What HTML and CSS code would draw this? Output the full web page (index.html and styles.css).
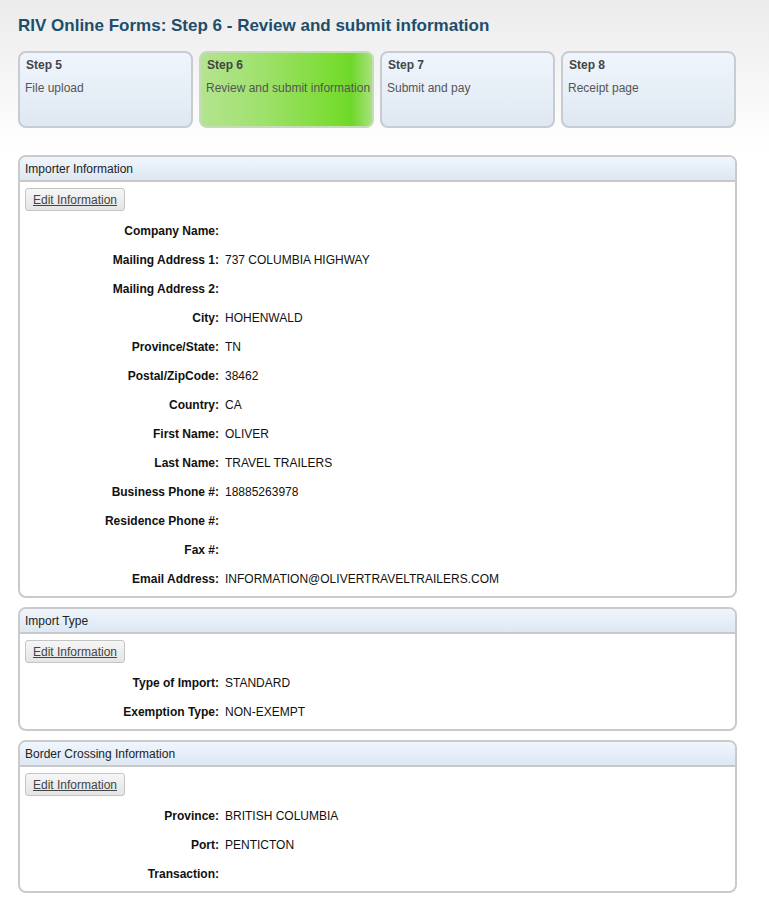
FILE: index.html
```html
<!DOCTYPE html>
<html lang="en">
<head>
    <meta charset="UTF-8">
    <meta name="viewport" content="width=device-width, initial-scale=1.0">
    <title>RIV Online Forms: Step 6</title>
    <link rel="stylesheet" href="styles.css">
</head>
<body>

<div class="page">
    <h1>RIV Online Forms: Step 6 - Review and submit information</h1>

    <!-- Step navigation -->
    <div class="steps">
        <div class="step">
            <div class="step-num">Step 5</div>
            <div class="step-name">File upload</div>
        </div>
        <div class="step current">
            <div class="step-num">Step 6</div>
            <div class="step-name">Review and submit information</div>
        </div>
        <div class="step">
            <div class="step-num">Step 7</div>
            <div class="step-name">Submit and pay</div>
        </div>
        <div class="step">
            <div class="step-num">Step 8</div>
            <div class="step-name">Receipt page</div>
        </div>
    </div>

    <!-- Importer -->
    <div class="panel">
        <div class="panel-head">Importer Information</div>
        <div class="panel-body">
            <button class="edit-btn">Edit Information</button>
            <div class="fields">
                <div class="label">Company Name:</div><div class="value"></div>
                <div class="label">Mailing Address 1:</div><div class="value">737 COLUMBIA HIGHWAY</div>
                <div class="label">Mailing Address 2:</div><div class="value"></div>
                <div class="label">City:</div><div class="value">HOHENWALD</div>
                <div class="label">Province/State:</div><div class="value">TN</div>
                <div class="label">Postal/ZipCode:</div><div class="value">38462</div>
                <div class="label">Country:</div><div class="value">CA</div>
                <div class="label">First Name:</div><div class="value">OLIVER</div>
                <div class="label">Last Name:</div><div class="value">TRAVEL TRAILERS</div>
                <div class="label">Business Phone #:</div><div class="value">18885263978</div>
                <div class="label">Residence Phone #:</div><div class="value"></div>
                <div class="label">Fax #:</div><div class="value"></div>
                <div class="label">Email Address:</div><div class="value">INFORMATION@OLIVERTRAVELTRAILERS.COM</div>
            </div>
        </div>
    </div>

    <!-- Import type -->
    <div class="panel">
        <div class="panel-head">Import Type</div>
        <div class="panel-body">
            <button class="edit-btn">Edit Information</button>
            <div class="fields">
                <div class="label">Type of Import:</div><div class="value">STANDARD</div>
                <div class="label">Exemption Type:</div><div class="value">NON-EXEMPT</div>
            </div>
        </div>
    </div>

    <!-- Border crossing -->
    <div class="panel">
        <div class="panel-head">Border Crossing Information</div>
        <div class="panel-body">
            <button class="edit-btn">Edit Information</button>
            <div class="fields">
                <div class="label">Province:</div><div class="value">BRITISH COLUMBIA</div>
                <div class="label">Port:</div><div class="value">PENTICTON</div>
                <div class="label">Transaction:</div><div class="value"></div>
            </div>
        </div>
    </div>
</div>

</body>
</html>
```

FILE: styles.css
```css
body {
    font-family: Arial, "Liberation Sans", sans-serif;
    font-size: 12px;
    color: #222;
    margin: 0;
    padding: 0;
    background: linear-gradient(to bottom, #ebebeb 0px, #f3f3f3 60px, #ffffff 150px) no-repeat;
    background-color: #fff;
}

.page {
    width: 719px;
    padding: 15px 0 0 18px;
}

h1 {
    color: #1d4d6b;
    font-size: 17px;
    font-weight: bold;
    margin: 0 0 14px 0;
    line-height: 22px;
}

.steps {
    display: flex;
    gap: 6px;
    margin-bottom: 27px;
}

.step {
    width: 171px;
    height: 73px;
    border: 2px solid #c8ccd0;
    border-radius: 8px;
    background: linear-gradient(to bottom, #eff5fc, #dfe8f2);
    padding: 0;
}

.step-num {
    font-weight: bold;
    color: #444;
    padding: 5px 0 0 6px;
    line-height: 14px;
}

.step-name {
    color: #555;
    padding: 9px 0 0 5px;
    line-height: 14px;
}

.step.current {
    border-color: #c6dcb8;
    background: linear-gradient(to right, #b4e48f 0%, #9fe16d 35%, #78dc2f 80%, #6ed82a 88%, #a8e27c 100%);
}

.panel {
    border: 2px solid #cacaca;
    border-radius: 8px;
    margin-bottom: 9px;
    overflow: hidden;
}

.panel-head {
    background: linear-gradient(to bottom, #eff5fc, #dde8f3);
    border-bottom: 2px solid #c8c8c8;
    padding: 0 5px;
    height: 23px;
    line-height: 24px;
    color: #222;
}

.panel-body {
    padding: 6px 5px 2px 5px;
}

.edit-btn {
    font-family: Arial, "Liberation Sans", sans-serif;
    font-size: 12px;
    color: #444;
    text-decoration: underline;
    width: 100px;
    height: 23px;
    border: 1px solid #c4c4c4;
    border-radius: 3px;
    background: linear-gradient(to bottom, #f6f6f6, #e4e4e4);
    padding: 0;
    cursor: pointer;
    display: block;
}

.fields {
    display: grid;
    grid-template-columns: 194px 1fr;
    column-gap: 6px;
    margin-top: 6px;
}

.label {
    font-weight: bold;
    text-align: right;
    line-height: 29px;
    color: #111;
}

.value {
    line-height: 29px;
    color: #111;
}
```
